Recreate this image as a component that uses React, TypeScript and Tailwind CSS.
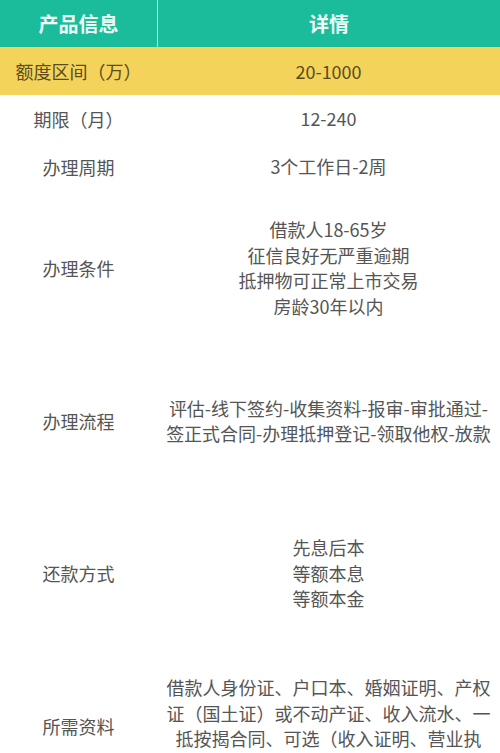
import React from 'react';

type Row = {
  label: string;
  lines: string[];
  height: string;
};

const rows: Row[] = [
  { label: '期限（月）', lines: ['12-240'], height: 'h-[48px]' },
  { label: '办理周期', lines: ['3个工作日-2周'], height: 'h-[48px]' },
  {
    label: '办理条件',
    lines: ['借款人18-65岁', '征信良好无严重逾期', '抵押物可正常上市交易', '房龄30年以内'],
    height: 'h-[154px]',
  },
  {
    label: '办理流程',
    lines: ['评估-线下签约-收集资料-报审-审批通过-', '签正式合同-办理抵押登记-领取他权-放款'],
    height: 'h-[152px]',
  },
  { label: '还款方式', lines: ['先息后本', '等额本息', '等额本金'], height: 'h-[153px]' },
  {
    label: '所需资料',
    lines: ['借款人身份证、户口本、婚姻证明、产权', '证（国土证）或不动产证、收入流水、一', '抵按揭合同、可选（收入证明、营业执', '照）'],
    height: 'h-[152px]',
  },
];

const App: React.FC = () => {
  return (
    <div
      className="w-[500px] h-[753px] overflow-hidden bg-white text-[18px] text-[#555]"
      style={{ fontFamily: '"Noto Sans CJK SC", "Noto Sans", sans-serif' }}
    >
      {/* Header */}
      <div className="flex h-[47px] bg-[#1bbc9b] text-[#eefcf6] font-bold text-[20px]">
        <div className="w-[157px] flex items-center justify-center">产品信息</div>
        <div className="flex-1 flex items-center justify-center border-l border-[#bfeee0]">详情</div>
      </div>

      {/* Highlighted row */}
      <div className="flex h-[48px] bg-[#f4d35b] text-[#5b4b1c]">
        <div className="w-[157px] flex items-center justify-center">额度区间（万）</div>
        <div className="flex-1 flex items-center justify-center">20-1000</div>
      </div>

      {rows.map((row) => (
        <div key={row.label} className={`flex ${row.height}`}>
          <div className="w-[157px] flex items-center justify-center">{row.label}</div>
          <div className="flex-1 flex flex-col items-center justify-center text-center leading-[25.5px]">
            {row.lines.map((line) => (
              <div key={line} className="whitespace-nowrap">{line}</div>
            ))}
          </div>
        </div>
      ))}
    </div>
  );
};

export default App;
